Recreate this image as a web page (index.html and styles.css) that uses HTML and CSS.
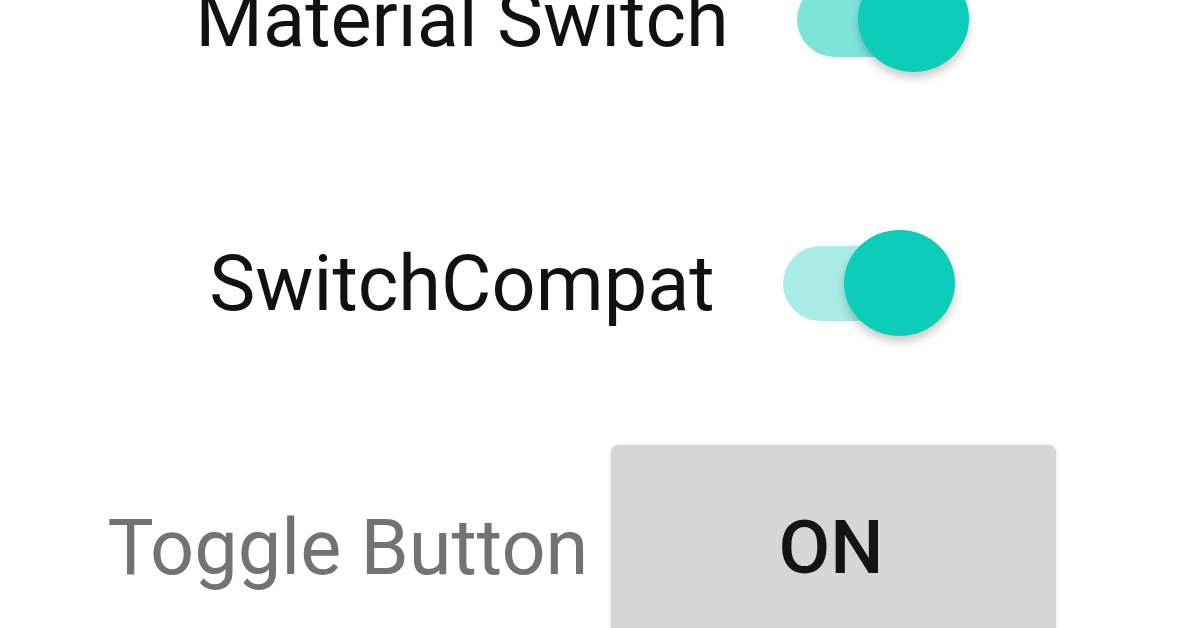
FILE: index.html
```html
<!DOCTYPE html>
<html lang="en">
<head>
<meta charset="utf-8">
<title>Switches</title>
<link rel="stylesheet" href="styles.css">
</head>
<body>
<main class="screen">
  <div class="row">
    <span class="label">Material Switch</span>
    <div class="switch">
      <div class="track track-material"></div>
      <div class="thumb"></div>
    </div>
  </div>
  <div class="row">
    <span class="label">SwitchCompat</span>
    <div class="switch">
      <div class="track track-compat"></div>
      <div class="thumb"></div>
    </div>
  </div>
  <div class="row row-toggle">
    <span class="label label-muted">Toggle Button</span>
    <button class="toggle" type="button">ON</button>
  </div>
</main>
</body>
</html>
```

FILE: styles.css
```css
html, body {
  margin: 0;
  padding: 0;
  background: #ffffff;
  overflow: hidden;
}

body {
  width: 1196px;
  height: 628px;
  font-family: Roboto, "Noto Sans", sans-serif;
}

.screen {
  display: flex;
  flex-direction: column;
  align-items: center;
  padding-right: 32px;
  margin-top: -113px;
}

.row {
  height: 264px;
  display: flex;
  align-items: center;
  gap: 68px;
}

.row-toggle {
  gap: 23px;
}

.label {
  font-size: 77.5px;
  color: #111111;
  white-space: nowrap;
}

.label-muted {
  color: #737373;
}

.switch {
  display: flex;
  align-items: center;
}

.track {
  width: 154px;
  height: 75px;
  border-radius: 38px;
}

.track-material {
  background: #7ee4d9;
}

.track-compat {
  background: #a9ece5;
}

.thumb {
  width: 111px;
  height: 106px;
  margin-left: -93px;
  border-radius: 50%;
  background: #0ccdb7;
  box-shadow: 0 6px 9px rgba(0, 0, 0, 0.2);
}

.toggle {
  width: 445px;
  height: 204px;
  border: none;
  border-radius: 7px;
  background: #d6d6d6;
  box-shadow: 0 1px 4px rgba(0, 0, 0, 0.12);
  font-family: Roboto, "Noto Sans", sans-serif;
  font-size: 75px;
  font-weight: 500;
  color: #141414;
  padding: 0 6px 0 0;
}
```
